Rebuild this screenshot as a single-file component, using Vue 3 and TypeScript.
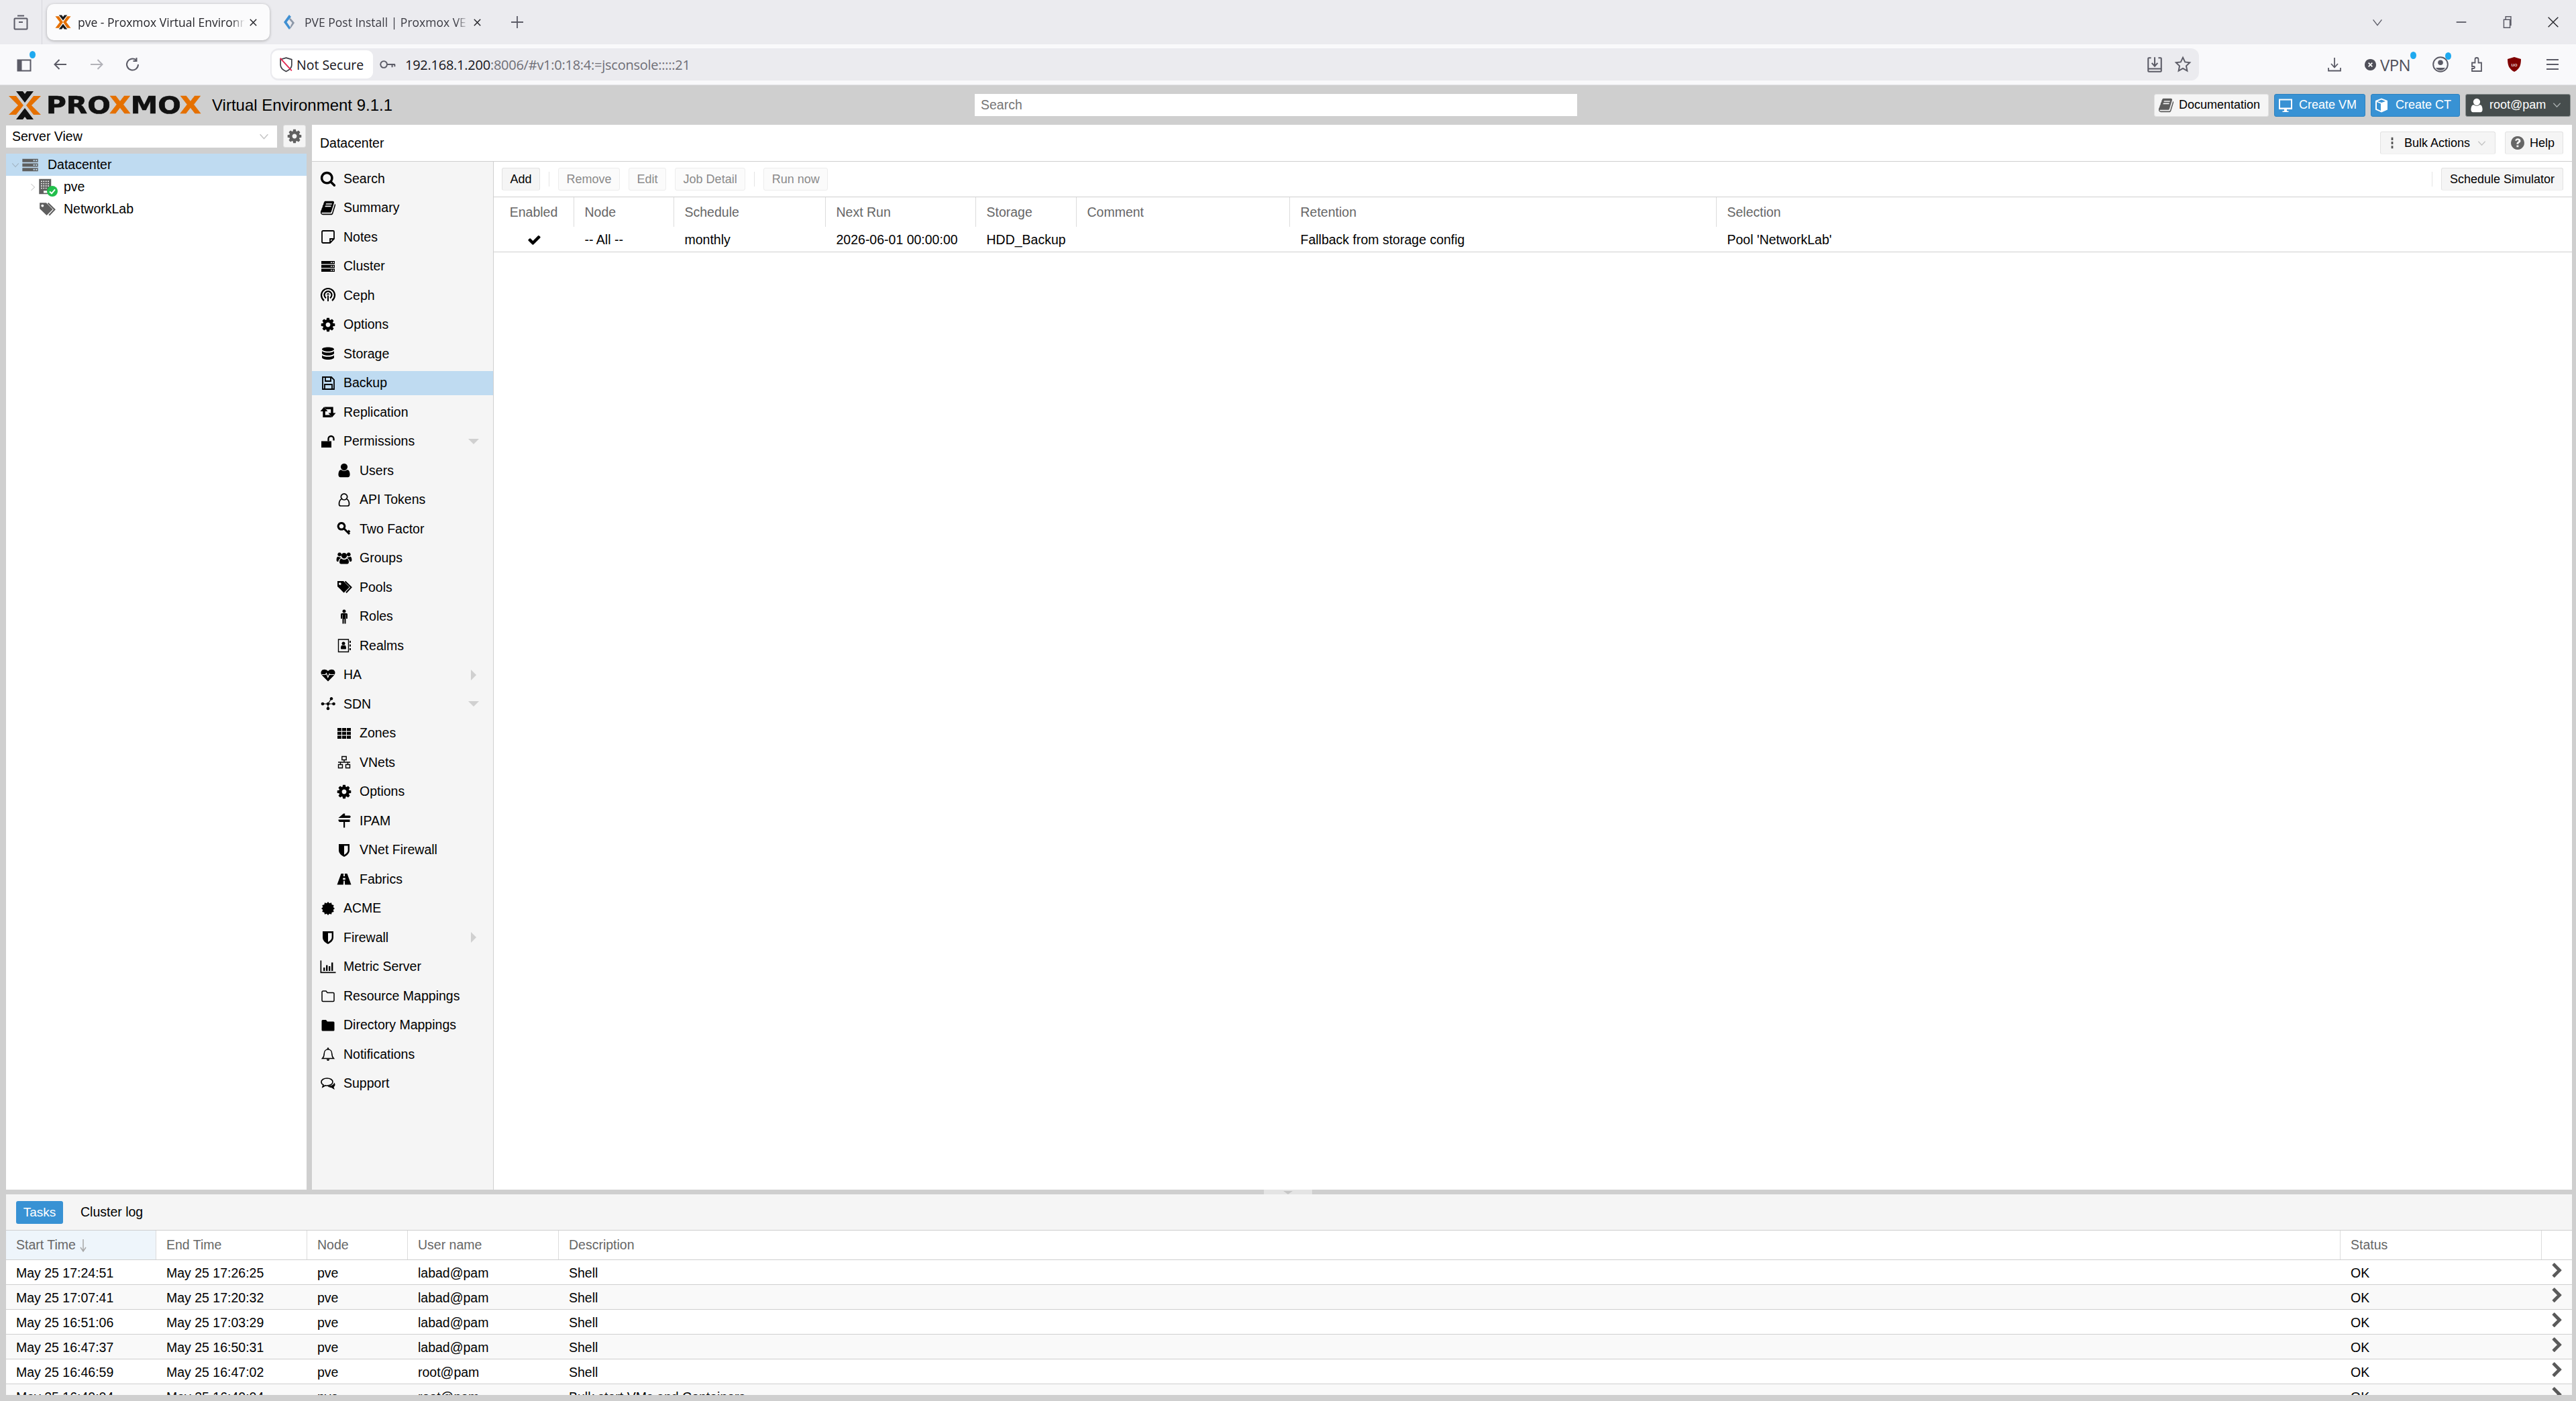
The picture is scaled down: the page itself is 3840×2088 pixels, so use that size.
<script setup lang="ts">
import { h } from 'vue'

type P = { d: string; s?: number; c?: string }
type I = { vb?: string; p: P[] }

const cogD = 'M1152 896q0-106-75-181t-181-75-181 75-75 181 75 181 181 75 181-75 75-181zm512-109v222q0 12-8 23t-20 13l-185 28q-19 54-39 91 35 50 107 138 10 12 10 25t-9 23q-27 37-99 108t-94 71q-12 0-26-9l-138-108q-44 23-91 38-16 136-29 186-7 28-36 28h-222q-14 0-24.5-8.5t-11.5-21.5l-28-184q-49-16-90-37l-141 107q-10 9-25 9-14 0-25-11-126-114-165-168-7-10-7-23 0-12 8-23 15-21 51-66.5t54-70.5q-27-50-41-99l-183-27q-13-2-21-12.5t-8-23.5v-222q0-12 8-23t19-13l186-28q14-46 39-92-40-57-107-138-10-12-10-24 0-10 9-23 26-36 98.5-107.5t94.5-71.5q13 0 26 10l138 107q44-23 91-38 16-136 29-186 7-28 36-28h222q14 0 24.5 8.5t11.5 21.5l28 184q49 16 90 37l142-107q9-9 24-9 13 0 25 10 129 119 165 170 7 8 7 22 0 12-8 23-15 21-51 66.5t-54 70.5q26 50 41 98l183 28q13 2 21 12.5t8 23.5z'
const bookD = 'M1703 478q40 57 18 129l-275 906q-19 64-76.5 107.5t-122.5 43.5h-923q-77 0-148.5-53.5t-99.5-131.5q-24-67-2-127 0-4 3-27t4-37q1-8-3-21.5t-3-19.5q2-11 8-21t16.5-23.5 16.5-23.5q23-38 45-91.5t30-91.5q3-10 .5-30t-.5-28q3-11 17-28t17-23q21-36 42-92t25-90q1-9-2.5-32t.5-28q4-13 22-30.5t22-22.5q19-26 42.5-84.5t27.5-96.5q1-8-3-25.5t-2-26.5q2-8 9-18t18-23 17-21q8-12 16.5-30.5t15-35 16-36 19.5-32 26.5-23.5 36-11.5 47.5 5.5l-1 3q38-9 51-9h761q74 0 114 56t18 130l-274 906q-36 119-71.5 153.5t-128.5 34.5h-869q-27 0-38 15-11 16-1 43 24 70 144 70h923q29 0 56-15.5t35-41.5l300-987q7-22 5-57 38 15 59 43zm-1064 2q-4 13 2 22.5t20 9.5h608q13 0 25.5-9.5t16.5-22.5l21-64q4-13-2-22.5t-20-9.5h-608q-13 0-25.5 9.5t-16.5 22.5zm-83 256q-4 13 2 22.5t20 9.5h608q13 0 25.5-9.5t16.5-22.5l21-64q4-13-2-22.5t-20-9.5h-608q-13 0-25.5 9.5t-16.5 22.5z'
const userD = 'M1536 1399q0 109-62.5 187t-150.5 78h-854q-88 0-150.5-78t-62.5-187q0-85 8.5-160.5t31.5-152 58.5-131 94-89 134.5-34.5q131 128 313 128t313-128q76 0 134.5 34.5t94 89 58.5 131 31.5 152 8.5 160.5zm-256-887q0 159-112.5 271.5t-271.5 112.5-271.5-112.5-112.5-271.5 112.5-271.5 271.5-112.5 271.5 112.5 112.5 271.5z'
const F = '0 0 1792 1792'
const serverD = 'M2 4h20v4.4H2zM16 5.4h1.8v1.6H16zM19 5.4h1.8v1.6H19zM2 9.8h20v4.4H2zM16 11.2h1.8v1.6H16zM19 11.2h1.8v1.6H19zM2 15.6h20V20H2zM16 17h1.8v1.6H16zM19 17h1.8v1.6H19z'
const shieldD = 'M4 3h16v9c0 5-4 8-8 10-4-2-8-5-8-10zM12 5.4h5.6V12c0 3-2.8 5.4-5.6 7z'
const tagsD = 'M2 3h9l9 9-8.4 8.4L2 11zM5.8 5.2a1.8 1.8 0 1 0 .01 0z'

function acme(): string {
  const pts: string[] = []
  const n = 24
  for (let i = 0; i < n; i++) {
    const r = i % 2 ? 8 : 10
    const a = (i / n) * Math.PI * 2
    pts.push(`${(12 + r * Math.cos(a)).toFixed(2)} ${(12 + r * Math.sin(a)).toFixed(2)}`)
  }
  return 'M' + pts.join('L') + 'z'
}

const icons: Record<string, I> = {
  search: { vb: F, p: [{ d: 'M1216 832q0-185-131.5-316.5t-316.5-131.5-316.5 131.5-131.5 316.5 131.5 316.5 316.5 131.5 316.5-131.5 131.5-316.5zm512 832q0 52-38 90t-90 38q-54 0-90-38l-343-342q-179 124-399 124-143 0-273.5-55.5t-225-150-150-225-55.5-273.5 55.5-273.5 150-225 225-150 273.5-55.5 273.5 55.5 225 150 150 225 55.5 273.5q0 220-124 399l343 343q37 37 37 90z' }] },
  book: { vb: F, p: [{ d: bookD }] },
  notes: { p: [{ d: 'M4.5 3h15A1.5 1.5 0 0 1 21 4.5V15l-6 6H4.500A1.500 1.500 0 0 1 3 19.500v-15A1.500 1.500 0 0 1 4.500 3zM21 15h-6v6', s: 1.8 }] },
  server: { p: [{ d: serverD }] },
  ceph: { p: [
    { d: 'M6 20A10 10 0 1 1 18 20', s: 2.2 },
    { d: 'M9 16.300A5.500 5.500 0 1 1 15 16.300', s: 2.200 },
    { d: 'M12 8.900a1.800 1.800 0 1 1-.01 0zM11 11h2v10h-2z' },
  ] },
  cog: { vb: F, p: [{ d: cogD }] },
  db: { p: [{ d: 'M12 2.500c5 0 9 1.300 9 3s-4 3.200-9 3.200-9-1.500-9-3.200 4-3 9-3zM3 8.200c1.400 1.600 5 2.300 9 2.300s7.600-.7 9-2.300v3.300c0 1.700-4 3.200-9 3.200s-9-1.500-9-3.200zM3 14.500c1.400 1.600 5 2.300 9 2.300s7.600-.7 9-2.300v3.300c0 1.700-4 3.200-9 3.200s-9-1.500-9-3.200z' }] },
  floppy: { p: [{ d: 'M4 3h13l4 4v14H4zM8 3v6h8V3M7 21v-7h11v7', s: 1.800 }] },
  retweet: { p: [
    { d: 'M6 4.500 11.500 11H7.800v5.500H15l2.500 3.500H4.300V11H.5z' },
    { d: 'M18 20 12.500 13.500H16.200V8H9L6.500 4.500H19.700V13.500H23.500z' },
  ] },
  unlock: { p: [
    { d: 'M2 11.500h15V21H2z' },
    { d: 'M12.500 11.500V8a4 4 0 0 1 8 0v2.500', s: 2.400 },
  ] },
  user: { vb: F, p: [{ d: userD }] },
  usero: { p: [
    { d: 'M12 2.800a4.600 4.600 0 1 1-.01 0z', s: 1.700 },
    { d: 'M8 11c-2.500 1-3.500 3.500-3.500 7.500 0 1.500 1 2.500 2.500 2.500h10c1.500 0 2.500-1 2.500-2.500 0-4-1-6.500-3.500-7.500', s: 1.700 },
  ] },
  key: { p: [
    { d: 'M8 3.500a4.800 4.800 0 1 1-.01 0z', s: 3 },
    { d: 'M11.500 11.500 20 20', s: 3 },
    { d: 'M18 14.500l2.500 2.500', s: 2.500 },
  ] },
  users: { p: [{ d: 'M12 4a4.200 4.200 0 1 1-.01 0zM5.200 3.500a2.900 2.900 0 1 1-.01 0zM18.800 3.500a2.900 2.900 0 1 1-.01 0zM8.200 12.400c1.100 1 2.300 1.600 3.800 1.600s2.700-.6 3.800-1.600c2.200.2 3.200 2 3.200 5.100 0 2-.9 3-2.400 3H7.400c-1.500 0-2.400-1-2.400-3 0-3.100 1-4.900 3.200-5.100zM2.900 9.500c.7.600 1.500.9 2.300.9.400 0 .8-.1 1.200-.2-.1.800.1 1.400.5 1.900-2 .6-3.200 2.200-3.500 4.800H2.300C1 16.900.6 16 .6 14.600c0-2.900.8-4.900 2.300-5.100zM21.100 9.500c1.500.2 2.300 2.200 2.300 5.100 0 1.400-.4 2.300-1.700 2.300h-1.400c-.3-2.600-1.500-4.200-3.500-4.800.4-.5.600-1.100.5-1.900.4.100.8.200 1.200.2.800 0 1.600-.3 2.600-.9z' }] },
  tags: { p: [{ d: tagsD }, { d: 'M13.500 3.500l9 8.700-7.500 8', s: 2 }] },
  male: { p: [{ d: 'M12 1.500a2.500 2.500 0 1 1-.01 0zM8.500 7h7A1.700 1.700 0 0 1 17 8.700V15h-2v-6h-.5v13.500h-2V15.500h-1v7h-2V9H9v6H7V8.700A1.700 1.700 0 0 1 8.500 7z' }] },
  realm: { p: [
    { d: 'M3.500 3h15v18.500h-15z', s: 1.400 },
    { d: 'M11 6.500a2.500 2.500 0 1 1-.01 0zM7 16c0-2.800.9-4.200 2.200-4.500.5.400 1.100.6 1.800.6s1.300-.2 1.800-.6c1.300.3 2.200 1.700 2.200 4.500 0 1-.5 1.500-1.200 1.500H8.200C7.500 17.500 7 17 7 16zM20 5h2v3h-2zM20 10.500h2v3h-2zM20 16h2v3h-2z' },
  ] },
  heart: { p: [
    { d: 'M12 21.500 3.500 13C1 10.500 1.200 7.500 2.200 6 3.800 3.300 8.200 2.500 12 6.200c3.800-3.700 8.200-2.900 9.800-.2 1 1.500 1.200 4.500-1.300 7z' },
    { d: 'M2.500 11.500H8l1.500-2 2.300 6 2.200-5 1.200 1H21.500', s: 1.200, c: '#f5f5f5' },
  ] },
  sdn: { p: [
    { d: 'M4 12H20M12 12V19M12 12 17 4', s: 1.200 },
    { d: 'M17 2a2.300 2.300 0 1 1-.01 0zM4 9.700a2.300 2.300 0 1 1-.01 0zM12 9.700a2.300 2.300 0 1 1-.01 0zM20.500 9.700a2.300 2.300 0 1 1-.01 0zM12 16.700a2.300 2.300 0 1 1-.01 0z' },
  ] },
  grid: { p: [{ d: 'M2 4h6v4.500H2zM9 4h6v4.500H9zM16 4h6v4.500h-6zM2 9.800h6v4.500H2zM9 9.800h6v4.500H9zM16 9.800h6v4.500h-6zM2 15.600h6v4.500H2zM9 15.600h6v4.500H9zM16 15.600h6v4.500h-6z' }] },
  vnet: { p: [{ d: 'M8.800 3.500h6.400v5H8.800zM3.500 15.500h6v5h-6zM14.500 15.500h6v5h-6zM12 8.500V12M3 12h18M6.500 12v3.500M17.500 12v3.500', s: 1.400 }] },
  ipam: { p: [{ d: 'M11 1.500h2.200v3H20.500l1.500 1.700-1.500 1.800H3.500zM3.500 10.500h17v3.500H13.200v8.500H11V14H5L3.500 12.200z' }] },
  shield: { p: [{ d: shieldD }] },
  road: { p: [{ d: 'M7.500 4h3.700l-.3 4h2.200l-.3-4h3.700l6 16.500h-9.300l-.4-6h-1.600l-.4 6H1.500zM10.200 10.500h3.600v2.500h-3.600z' }] },
  acme: { p: [{ d: acme() }] },
  chart: { p: [{ d: 'M.5 2.500h1.700v17H23.500v1.800H.5zM5 13h2.400v5H5zM9 9.500h2.400V18H9zM13 11h2.400v7H13zM17 5.500h2.400V18H17z' }] },
  foldero: { p: [{ d: 'M3 6.500a1.500 1.500 0 0 1 1.500-1.500H9l2 2.500h8.500A1.500 1.500 0 0 1 21 9v10a1.500 1.500 0 0 1-1.500 1.500h-15A1.500 1.500 0 0 1 3 19z', s: 1.500 }] },
  folder: { p: [{ d: 'M2.500 5.500A1.500 1.500 0 0 1 4 4h5l2 2.500h9A1.500 1.500 0 0 1 21.500 8v11a1.500 1.500 0 0 1-1.500 1.500H4A1.500 1.500 0 0 1 2.500 19z' }] },
  bell: { p: [
    { d: 'M3.500 18.500c2-2 2.800-4 2.800-7.500 0-3.500 2.400-6 5.700-6s5.700 2.500 5.700 6c0 3.500.8 5.500 2.800 7.500z', s: 1.500 },
    { d: 'M12 2.200a1.300 1.300 0 1 1-.01 0zM9.800 19.500h4.400c0 1.400-1 2.500-2.200 2.500s-2.200-1.100-2.200-2.500z' },
  ] },
  comments: { p: [
    { d: 'M10.500 4c4.700 0 8.500 2.300 8.500 5.500s-3.800 5.500-8.500 5.500c-1 0-1.800 0-2.700-.3L4 17l1-3.300C3 12.800 2 11.200 2 9.500 2 6.300 5.800 4 10.500 4z', s: 1.600 },
    { d: 'M21 10.500c1 .8 1.500 1.900 1.500 3 0 1.400-.8 2.600-2 3.500l1.300 4-4.800-3c-2.400-.2-4.300-.9-5.700-2.300 5 .2 9.500-1.800 9.700-5.200z' },
  ] },
  check: { vb: F, p: [{ d: 'M1671 566q0 40-28 68l-724 724-136 136q-28 28-68 28t-68-28l-136-136-362-362q-28-28-28-68t28-68l136-136q28-28 68-28t68 28l294 295 656-657q28-28 68-28t68 28l136 136q28 28 28 68z' }] },
  chev: { vb: F, p: [{ d: 'M1363 877l-742 742q-19 19-45 19t-45-19l-166-166q-19-19-19-45t19-45l531-531-531-531q-19-19-19-45t19-45l166-166q19-19 45-19t45 19l742 742q19 19 19 45t-19 45z' }] },
  desktop: { p: [{ d: 'M2 2.500h20v15.500H14v2.500h2.500V22h-9v-1.500H10V18H2zM4 4.500v11h16v-11z' }] },
  cube: { p: [{ d: 'M12 1.500 21 5v13.500L12 22.500 3 18.500V5zM5 7v10.200l6 2.700V9.500zM12 3.600 6 5.900l6 2.200 6-2.200z' }] },
  dots: { p: [{ d: 'M10.500 3h3v4.500h-3zM10.500 9.700h3v4.600h-3zM10.500 16.500h3V21h-3z' }] },
  help: { p: [{ d: 'M12 2a10 10 0 1 0 .01 0zM12 5.200c2.700 0 4.500 1.500 4.500 3.700 0 1.500-.8 2.400-2.100 3.200-.8.500-1 .9-1 1.700h-3c0-1.800.5-2.700 1.800-3.500 1-.6 1.300-.9 1.300-1.500 0-.7-.6-1.100-1.500-1.100-.9 0-1.600.5-2 1.500L8.200 8.200C8.900 6.300 10.200 5.200 12 5.200zM10.400 15.400h3v2.900h-3z' }] },
  building: { p: [{ d: 'M2 1.500h16v20H2zM4.500 4v1.500H6V4zM7.500 4v1.500H9V4zM10.500 4v1.500H12V4zM13.500 4v1.500H15V4zM4.500 7v1.500H6V7zM7.500 7v1.500H9V7zM10.500 7v1.500H12V7zM13.500 7v1.500H15V7zM4.500 10v1.500H6V10zM7.500 10v1.500H9V10zM10.500 10v1.500H12V10zM13.500 10v1.500H15V10zM4.500 13v1.500H6V13zM7.500 13v1.500H9V13zM10.500 13v1.500H12V13zM8 17v3h5.500v-3z' }] },
}

const Ic = (props: { n: string }) => {
  const i = icons[props.n]
  return h(
    'svg',
    { viewBox: i.vb || '0 0 24 24', 'aria-hidden': 'true' },
    i.p.map((p: P) =>
      h('path', {
        d: p.d,
        'fill-rule': 'evenodd',
        fill: p.s ? 'none' : p.c || 'currentColor',
        stroke: p.s ? p.c || 'currentColor' : 'none',
        'stroke-width': p.s,
      })
    )
  )
}
Ic.props = ['n']

type Item = { l: string; i: string; sub?: boolean; sel?: boolean; arrow?: 'down' | 'right' }
const menu: Item[] = [
  { l: 'Search', i: 'search' },
  { l: 'Summary', i: 'book' },
  { l: 'Notes', i: 'notes' },
  { l: 'Cluster', i: 'server' },
  { l: 'Ceph', i: 'ceph' },
  { l: 'Options', i: 'cog' },
  { l: 'Storage', i: 'db' },
  { l: 'Backup', i: 'floppy', sel: true },
  { l: 'Replication', i: 'retweet' },
  { l: 'Permissions', i: 'unlock', arrow: 'down' },
  { l: 'Users', i: 'user', sub: true },
  { l: 'API Tokens', i: 'usero', sub: true },
  { l: 'Two Factor', i: 'key', sub: true },
  { l: 'Groups', i: 'users', sub: true },
  { l: 'Pools', i: 'tags', sub: true },
  { l: 'Roles', i: 'male', sub: true },
  { l: 'Realms', i: 'realm', sub: true },
  { l: 'HA', i: 'heart', arrow: 'right' },
  { l: 'SDN', i: 'sdn', arrow: 'down' },
  { l: 'Zones', i: 'grid', sub: true },
  { l: 'VNets', i: 'vnet', sub: true },
  { l: 'Options', i: 'cog', sub: true },
  { l: 'IPAM', i: 'ipam', sub: true },
  { l: 'VNet Firewall', i: 'shield', sub: true },
  { l: 'Fabrics', i: 'road', sub: true },
  { l: 'ACME', i: 'acme' },
  { l: 'Firewall', i: 'shield', arrow: 'right' },
  { l: 'Metric Server', i: 'chart' },
  { l: 'Resource Mappings', i: 'foldero' },
  { l: 'Directory Mappings', i: 'folder' },
  { l: 'Notifications', i: 'bell' },
  { l: 'Support', i: 'comments' },
]

const jobHead = ['Enabled', 'Node', 'Schedule', 'Next Run', 'Storage', 'Comment', 'Retention', 'Selection']
const jobRow = ['-- All --', 'monthly', '2026-06-01 00:00:00', 'HDD_Backup', '', 'Fallback from storage config', "Pool 'NetworkLab'"]

const logHead = ['End Time', 'Node', 'User name', 'Description', 'Status', '']
const logRows = [
  ['May 25 17:24:51', 'May 25 17:26:25', 'pve', 'labad@pam', 'Shell', 'OK'],
  ['May 25 17:07:41', 'May 25 17:20:32', 'pve', 'labad@pam', 'Shell', 'OK'],
  ['May 25 16:51:06', 'May 25 17:03:29', 'pve', 'labad@pam', 'Shell', 'OK'],
  ['May 25 16:47:37', 'May 25 16:50:31', 'pve', 'labad@pam', 'Shell', 'OK'],
  ['May 25 16:46:59', 'May 25 16:47:02', 'pve', 'root@pam', 'Shell', 'OK'],
  ['May 25 16:40:04', 'May 25 16:40:04', 'pve', 'root@pam', 'Bulk start VMs and Containers', 'OK'],
]
</script>

<template>
  <div class="shell">
    <!-- browser tab strip -->
    <div class="tabstrip">
      <div class="tabs-btn">
        <svg viewBox="0 0 24 24"><path d="M7 2.500h10M3.500 6.500h17a1 1 0 0 1 1 1v14a1 1 0 0 1-1 1h-17a1 1 0 0 1-1-1v-14a1 1 0 0 1 1-1zM9 12h6" fill="none" stroke="#5b5b66" stroke-width="2" /></svg>
      </div>
      <div class="tab active">
        <svg class="favicon" viewBox="0 0 50 44"><path d="M1 4h11l13 18L12 40H1l14-18z" fill="#e57000" /><path d="M49 4H38L25 22l13 18h11L35 22z" fill="#e57000" /><path d="M12 0h9l4 6 4-6h9L25 17zM12 44h9l4-6 4 6h9L25 27z" fill="#1a1a1a" /></svg>
        <span class="tab-title">pve - Proxmox Virtual Environment</span>
        <svg class="tab-x" viewBox="0 0 16 16"><path d="M3 3l10 10M13 3L3 13" stroke="#26262b" stroke-width="1.600" fill="none" /></svg>
      </div>
      <div class="tab">
        <svg class="favicon" viewBox="0 0 24 24"><path d="M11 1 3 12l8 11 2-3-5.500-8L14 4z" fill="#3f8fd2" /><path d="M13 6l6 7-7 10 1-5 2.500-5L11 8z" fill="#8d98a8" /></svg>
        <span class="tab-title">PVE Post Install | Proxmox VE Helper-Scripts</span>
        <svg class="tab-x" viewBox="0 0 16 16"><path d="M3 3l10 10M13 3L3 13" stroke="#26262b" stroke-width="1.600" fill="none" /></svg>
      </div>
      <svg class="tab-plus" viewBox="0 0 24 24"><path d="M12 3v18M3 12h18" stroke="#5b5b66" stroke-width="1.800" fill="none" /></svg>
      <div class="win">
        <svg viewBox="0 0 24 24"><path d="M5 8l7 9 7-9" stroke="#5b5b66" stroke-width="1.500" fill="none" /></svg>
        <svg class="w-min" viewBox="0 0 24 24"><path d="M4 12h16" stroke="#5b5b66" stroke-width="2" fill="none" /></svg>
        <svg class="w-max" viewBox="0 0 24 24"><path d="M7 8h10v13H7zM10 8V3h8.500v14H17" stroke="#5b5b66" stroke-width="1.600" fill="none" /></svg>
        <svg class="w-x" viewBox="0 0 24 24"><path d="M4 4l16 16M20 4L4 20" stroke="#26262b" stroke-width="1.500" fill="none" /></svg>
      </div>
    </div>

    <!-- browser nav -->
    <div class="navbar">
      <div class="nav-slot dot-wrap">
        <svg viewBox="0 0 24 24"><path d="M2.500 5.500h19v16h-19z" stroke="#5b5b66" stroke-width="2" fill="none" /><path d="M2.500 5.500h6v16h-6z" fill="#5b5b66" /></svg>
        <i class="bdot"></i>
      </div>
      <div class="nav-slot"><svg viewBox="0 0 24 24"><path d="M21 12H4M10.500 5 3.500 12l7 7" stroke="#5b5b66" stroke-width="2" fill="none" /></svg></div>
      <div class="nav-slot"><svg viewBox="0 0 24 24"><path d="M3 12h17M13.500 5l7 7-7 7" stroke="#b2b2b8" stroke-width="2" fill="none" /></svg></div>
      <div class="nav-slot"><svg viewBox="0 0 24 24"><path d="M20 12a8.500 8.500 0 1 1-3-6.500M17.500 2v5h-5" stroke="#5b5b66" stroke-width="2" fill="none" /></svg></div>

      <div class="urlbar">
        <div class="secure">
          <svg viewBox="0 0 24 24"><path d="M12 2.500 20 5v8c0 4.500-3.500 7-8 9-4.500-2-8-4.500-8-9V5z" stroke="#3b3b42" stroke-width="1.600" fill="none" /><path d="M3.500 3 20 21" stroke="#e22850" stroke-width="1.800" fill="none" /></svg>
          <span>Not Secure</span>
        </div>
        <svg class="key" viewBox="0 0 24 24"><path d="M7.500 7.500a4.500 4.500 0 1 1-.01 0zM12 12h11M19 12v4M22.500 12v3" stroke="#5b5b66" stroke-width="1.800" fill="none" /></svg>
        <div class="url"><b>192.168.1.200</b>:8006/#v1:0:18:4:=jsconsole:::::21</div>
        <svg class="url-ic first" viewBox="0 0 24 24"><path d="M7 3H4a1 1 0 0 0-1 1v17a1 1 0 0 0 1 1h16a1 1 0 0 0 1-1V4a1 1 0 0 0-1-1h-3M3 18h18M12 2v11M8 10l4 4.500 4-4.500" stroke="#5b5b66" stroke-width="1.900" fill="none" /></svg>
        <svg class="url-ic" viewBox="0 0 24 24"><path d="M12 2.500l2.900 6.200 6.600.8-4.900 4.600 1.300 6.700-5.900-3.400-5.900 3.400 1.300-6.700L2.500 9.500l6.600-.8z" stroke="#5b5b66" stroke-width="1.800" fill="none" /></svg>
      </div>

      <div class="nav-right">
        <svg class="nr dl" viewBox="0 0 24 24"><path d="M12 2v14M7 11l5 5.500 5-5.500M3 17v4.500h18V17" stroke="#5b5b66" stroke-width="1.800" fill="none" /></svg>
        <div class="vpn">
          <svg viewBox="0 0 20 20"><path d="M10 1a9 9 0 1 0 .01 0z" fill="#50505a" /><path d="M7 7l6 6M13 7l-6 6" stroke="#fff" stroke-width="1.800" /></svg>
          <span>VPN</span>
          <i class="bdot"></i>
        </div>
        <div class="nr-wrap prof">
          <svg viewBox="0 0 24 24"><circle cx="12" cy="12" r="10" stroke="#5b5b66" stroke-width="1.800" fill="none" /><circle cx="12" cy="9.500" r="3.500" fill="#5b5b66" /><path d="M5.500 16.500h13c-1.500 2.500-4 3.500-6.500 3.500s-5-1-6.500-3.500z" fill="#5b5b66" /></svg>
          <i class="bdot"></i>
        </div>
        <svg class="nr ext" viewBox="0 0 24 24"><path d="M5 22h14V9.500h-4.500V4.500a2.500 2.500 0 0 0-5 0V9.500H5v5.500h2.500a1.500 1.500 0 0 1 0 3H5z" stroke="#5b5b66" stroke-width="1.800" fill="none" /></svg>
        <svg class="nr ub" viewBox="0 0 24 24"><path d="M12 1 22 4c0 9-2 15-10 19C4 19 2 13 2 4z" fill="#800000" /><text x="12" y="14.500" font-size="8" fill="#fff" text-anchor="middle" font-family="Liberation Sans, sans-serif">uo</text></svg>
        <svg class="nr mn" viewBox="0 0 24 24"><path d="M3 5h18M3 12h18M3 19h18" stroke="#5b5b66" stroke-width="2" fill="none" /></svg>
      </div>
    </div>

    <!-- PVE header -->
    <header class="pve-head">
      <div class="brand">
        <svg class="logo-x" viewBox="0 0 50 44"><path d="M1 8h11l11 14L12 36H1l14-14z" fill="#e57000" /><path d="M49 8H38L27 22l11 14h11L35 22z" fill="#e57000" /><path d="M12 1h10l3 4 3-4h10L25 18zM12 43h10l3-4 3 4h10L25 26z" fill="#111" /></svg>
        <span class="logo-t">PRO<em>X</em>MO<em>X</em></span>
        <span class="ve">Virtual Environment 9.1.1</span>
      </div>
      <div class="gsearch">Search</div>
      <div class="head-btns">
        <div class="hbtn doc"><Ic n="book" /><span>Documentation</span></div>
        <div class="hbtn blue vm"><Ic n="desktop" /><span>Create VM</span></div>
        <div class="hbtn blue ct"><Ic n="cube" /><span>Create CT</span></div>
        <div class="hbtn dark">
          <Ic n="user" /><span>root@pam</span>
          <svg class="caret" viewBox="0 0 16 16"><path d="M2.500 5 8 11l5.500-6" stroke="#a8adad" stroke-width="1.400" fill="none" /></svg>
        </div>
      </div>
    </header>

    <!-- workspace -->
    <div class="work">
      <aside class="left">
        <div class="view-row">
          <div class="combo">
            <span>Server View</span>
            <svg class="caret" viewBox="0 0 16 16"><path d="M2.500 5 8 11l5.500-6" stroke="#c4c4c4" stroke-width="1.400" fill="none" /></svg>
          </div>
          <div class="gear"><Ic n="cog" /></div>
        </div>
        <div class="tree">
          <div class="node sel">
            <svg class="tw" viewBox="0 0 16 16"><path d="M2.500 5 8 11l5.500-6" stroke="#a3b5c4" stroke-width="1.200" fill="none" /></svg>
            <Ic class="dc" n="server" />
            <span class="dc-l">Datacenter</span>
          </div>
          <div class="node l2">
            <svg class="tw2" viewBox="0 0 16 16"><path d="M5 2.500 11 8l-6 5.500" stroke="#d0d0d0" stroke-width="1.200" fill="none" /></svg>
            <div class="pve-ic">
              <Ic n="building" />
              <svg class="ok" viewBox="0 0 16 16"><circle cx="8" cy="8" r="8" fill="#21bf4b" /><path d="M4 8.500 7 11.300l5-6" stroke="#fff" stroke-width="2" fill="none" /></svg>
            </div>
            <span>pve</span>
          </div>
          <div class="node l3">
            <Ic class="gray" n="tags" />
            <span>NetworkLab</span>
          </div>
        </div>
      </aside>

      <main class="content">
        <div class="title">
          <span class="t">Datacenter</span>
          <div class="title-btns">
            <div class="btn bulk">
              <Ic class="dots" n="dots" />
              <span>Bulk Actions</span>
              <svg class="caret" viewBox="0 0 16 16"><path d="M2.500 5 8 11l5.500-6" stroke="#c4c4c4" stroke-width="1.400" fill="none" /></svg>
            </div>
            <div class="btn help"><Ic class="hp" n="help" /><span>Help</span></div>
          </div>
        </div>

        <div class="split">
          <nav class="menu">
            <div v-for="(m, i) in menu" :key="i" class="mi" :class="{ sub: m.sub, sel: m.sel }">
              <Ic class="mic" :n="m.i" />
              <span>{{ m.l }}</span>
              <i v-if="m.arrow" class="arrow" :class="m.arrow"></i>
            </div>
          </nav>

          <section class="pane">
            <div class="tb">
              <div class="btn">Add</div>
              <i class="sep"></i>
              <div class="btn off">Remove</div>
              <div class="btn off">Edit</div>
              <div class="btn off">Job Detail</div>
              <i class="sep"></i>
              <div class="btn off">Run now</div>
              <i class="sep push"></i>
              <div class="btn sim">Schedule Simulator</div>
            </div>
            <div class="jobs jhead">
              <div v-for="(c, i) in jobHead" :key="c" class="hc" :class="{ ctr: i === 0 }">{{ c }}</div>
            </div>
            <div class="jobs jrow">
              <div class="cc ctr"><Ic class="chk" n="check" /></div>
              <div v-for="(c, i) in jobRow" :key="i" class="cc">{{ c }}</div>
            </div>
          </section>
        </div>
      </main>
    </div>

    <div class="handle"><i></i></div>

    <!-- log panel -->
    <section class="log">
      <div class="log-tb">
        <div class="tasks">Tasks</div>
        <div class="clog">Cluster log</div>
      </div>
      <div class="lrow lhead">
        <div class="hc sorted">
          <span>Start Time</span>
          <svg class="sort" viewBox="0 0 12 24"><path d="M6 3v17M2 15l4 6 4-6" stroke="#a8a8a8" stroke-width="1.500" fill="none" /></svg>
        </div>
        <div v-for="(c, i) in logHead" :key="i" class="hc">{{ c }}</div>
      </div>
      <div class="lbody">
        <div v-for="(r, i) in logRows" :key="i" class="lrow ldata" :class="{ odd: i % 2 === 1 }">
          <div v-for="(c, j) in r" :key="j" class="cc">{{ c }}</div>
          <div class="cc go"><Ic class="gochev" n="chev" /></div>
        </div>
      </div>
    </section>
  </div>
</template>

<style>
html, body { margin: 0; padding: 0; background: #cfcfcf; }
</style>

<style scoped>
.shell {
  width: 100vw; height: 100vh; overflow: hidden; display: flex; flex-direction: column;
  background: #cfcfcf; color: #000; font-family: "Liberation Sans", Arial, sans-serif; font-size: 19.5px;
}
svg { display: block; flex: none; }

/* Tab strip */
.tabstrip { height: 66px; flex: none; background: #ebebef; display: flex; align-items: center; position: relative; font-family: "Open Sans", "Noto Sans", sans-serif; }
.tabs-btn { width: 62px; height: 66px; flex: none; display: flex; align-items: center; justify-content: center; border-right: 1px solid #d6d6dc; box-sizing: content-box; }
.tabs-btn svg { width: 24px; height: 24px; }
.tab { width: 332px; height: 54px; margin-left: 7px; display: flex; align-items: center; padding: 0 17px 0 12px; box-sizing: border-box; border-radius: 10px; font-size: 17.5px; color: #3a3a42; flex: none; }
.tab + .tab { margin-left: 4px; width: 317px; padding-left: 14px; padding-right: 4px; }
.tab.active { background: #fbfbfc; box-shadow: 0 1px 4px rgba(0, 0, 0, .28); color: #26262b; }
.favicon { width: 24px; height: 28px; flex: none; margin-right: 10px; }
.tab-title { flex: 1; overflow: hidden; white-space: nowrap; -webkit-mask-image: linear-gradient(to right, #000 92%, transparent 100%); mask-image: linear-gradient(to right, #000 92%, transparent 100%); }
.tab-x { width: 15px; height: 15px; flex: none; margin-left: 5px; }
.tab-plus { width: 24px; height: 24px; flex: none; margin-left: 36px; }
.win { margin-left: auto; display: flex; align-items: center; padding-right: 23px; }
.win svg { width: 22px; height: 22px; }
.w-min { margin-left: 103px; }
.w-max { margin-left: 46px; }
.w-x { margin-left: 47px; }

/* Nav */
.navbar { height: 60px; flex: none; background: #f9f9fb; display: flex; align-items: center; padding-left: 9px; border-bottom: 1px solid #e2e2e6; font-family: "Open Sans", "Noto Sans", sans-serif; }
.nav-slot { width: 54px; height: 40px; display: flex; align-items: center; justify-content: center; position: relative; flex: none; }
.nav-slot svg { width: 24px; height: 24px; }
.bdot { position: absolute; width: 9px; height: 11px; border-radius: 50%; background: #1fa9ef; }
.dot-wrap .bdot { top: 0; right: 10px; }
.urlbar { margin-left: 178px; width: 2875px; height: 48px; flex: none; background: #ebebef; border-radius: 12px; display: flex; align-items: center; padding: 0 11px 0 2px; box-sizing: border-box; }
.secure { width: 151px; height: 42px; background: #fff; border-radius: 9px; display: flex; align-items: center; padding-left: 9px; box-sizing: border-box; font-size: 19.5px; color: #15141a; flex: none; white-space: nowrap; }
.secure svg { width: 25px; height: 30px; margin-right: 3px; }
.key { width: 26px; height: 26px; margin-left: 8px; flex: none; }
.url { margin-left: 14px; font-size: 20px; color: #6e6e76; letter-spacing: -.25px; white-space: nowrap; }
.url b { font-weight: 400; color: #15141a; }
.url-ic { width: 26px; height: 30px; flex: none; margin-left: 16px; }
.url-ic.first { margin-left: auto; }
.nav-right { flex: 1; display: flex; align-items: center; position: relative; }
.nr { width: 24px; height: 26px; flex: none; }
.dl { margin-left: 190px; }
.vpn { margin-left: 32px; display: flex; align-items: center; position: relative; font-size: 24px; color: #50505a; }
.vpn svg { width: 19px; height: 19px; margin-right: 5px; }
.vpn span { width: 48px; white-space: nowrap; letter-spacing: -.6px; }
.vpn .bdot { top: -3px; right: -6px; }
.nr-wrap { position: relative; }
.prof { margin-left: 29px; width: 26px; height: 26px; }
.prof svg { width: 26px; height: 26px; }
.prof .bdot { top: -5px; right: -3px; }
.ext { margin-left: 29px; }
.ub { margin-left: 32px; }
.mn { margin-left: 33px; }

/* PVE header */
.pve-head { height: 59px; flex: none; display: grid; grid-template-columns: 1453px 898px 1fr; align-items: center; }
.brand { display: flex; align-items: center; padding-left: 12px; }
.logo-x { width: 50px; height: 44px; flex: none; }
.logo-t { margin-left: 7px; width: 235px; flex: none; font-family: "DejaVu Sans", sans-serif; font-weight: 700; font-size: 36px; letter-spacing: 0; color: #111; line-height: 1; white-space: nowrap; transform: scaleX(1.13); transform-origin: left center; -webkit-text-stroke: .7px currentColor; }
.logo-t em { font-style: normal; color: #e57000; }
.ve { margin-left: 12px; font-size: 24px; color: #000; white-space: nowrap; }
.gsearch { height: 33px; background: #fff; padding-left: 9px; display: flex; align-items: center; color: #757575; }
.head-btns { display: flex; justify-content: flex-end; gap: 8px; padding-right: 8px; }
.hbtn { height: 34px; display: flex; align-items: center; box-sizing: border-box; border-radius: 3px; font-size: 18px; white-space: nowrap; flex: none; }
.hbtn svg { width: 24px; height: 24px; }
.hbtn .caret { width: 15px; height: 15px; margin: 0 0 0 9px; }
.doc { width: 171px; background: #f5f5f5; border: 1px solid #e2e2e2; color: #000; padding-left: 5px; }
.doc svg { color: #5c5c5c; margin-right: 7px; }
.blue { background: #3892d4; border: 1px solid #2d81bf; color: #fff; }
.vm { width: 136px; padding-left: 4px; }
.vm svg { margin-right: 8px; }
.ct { width: 133px; padding-left: 3px; }
.ct svg { margin-right: 9px; }
.dark { width: 157px; background: #464d4d; border: 1px solid #8b9191; color: #fff; padding-left: 4px; }
.dark svg:first-child { margin-right: 7px; }

/* Workspace */
.work { flex: 1; min-height: 0; display: flex; gap: 8px; padding: 0 6px 0 9px; }
.left { width: 448px; flex: none; display: flex; flex-direction: column; }
.view-row { height: 43px; flex: none; display: flex; align-items: flex-start; justify-content: space-between; }
.combo { margin-top: 1px; width: 404px; height: 33px; background: #fff; padding: 0 9px; box-sizing: border-box; display: flex; align-items: center; justify-content: space-between; }
.combo .caret { width: 17px; height: 17px; margin-right: 2px; }
.gear { width: 34px; height: 34px; margin-right: 1px; background: #f5f5f5; border: 1px solid #e0e0e0; border-radius: 3px; box-sizing: border-box; display: flex; align-items: center; justify-content: center; color: #616161; }
.gear svg { width: 24px; height: 24px; }
.tree { flex: 1; background: #fff; }
.node { height: 33px; display: flex; align-items: center; }
.node.sel { background: #bfdbf1; }
.tw { width: 14px; height: 14px; margin-left: 7px; }
.dc { width: 28px; height: 28px; margin-left: 1px; color: #5f5f5f; }
.dc-l { margin-left: 12px; }
.l2 { padding-left: 33px; }
.tw2 { width: 14px; height: 14px; }
.pve-ic { width: 27px; height: 27px; position: relative; color: #5f5f5f; flex: none; }
.pve-ic > svg:first-child { width: 27px; height: 27px; }
.ok { position: absolute; width: 16px; height: 16px; right: -3px; bottom: -1px; }
.l2 span { margin-left: 12px; }
.l3 span { margin-left: 12px; }
.l3 { padding-left: 48px; }
.gray { width: 26px; height: 26px; color: #5f5f5f; }

/* Content */
.content { flex: 1; min-width: 0; display: flex; flex-direction: column; background: #fff; }
.title { height: 55px; flex: none; box-sizing: border-box; border-bottom: 1px solid #cfcfcf; display: flex; align-items: center; justify-content: space-between; padding: 0 13px 0 12px; }
.title-btns { display: flex; gap: 14px; }
.btn { height: 34px; padding: 0 11.5px; box-sizing: border-box; border: 1px solid #e2e2e2; border-bottom-color: #efefef; border-radius: 3px; background: #f5f5f5; font-size: 18px; display: flex; align-items: center; white-space: nowrap; color: #000; flex: none; }
.btn.off { background: #fbfbfb; color: #8a8a8a; border-color: #ededed; }
.btn.sim { width: 182px; justify-content: center; padding: 0; }
.bulk { width: 172px; padding: 0 8px; }
.bulk .caret { width: 15px; height: 15px; margin-left: 10px; }
.dots { width: 22px; height: 22px; margin-right: 7px; margin-left: -2px; color: #555; }
.help { width: 87px; padding: 0 6px; }
.hp { width: 24px; height: 24px; margin-right: 6px; color: #666; }
.split { flex: 1; min-height: 0; display: flex; }
.menu { width: 271px; flex: none; box-sizing: border-box; border-right: 1px solid #cfcfcf; background: #f5f5f5; padding-top: 7px; }
.mi { height: 36px; margin-bottom: 7.5px; display: flex; align-items: center; padding-left: 12px; position: relative; white-space: nowrap; }
.mi.sel { background: #bfdbf1; }
.mi.sub { padding-left: 36px; }
.mic { width: 24px; height: 24px; margin-right: 11px; color: #000; }
.arrow { position: absolute; width: 0; height: 0; }
.arrow.down { left: 233px; top: 14px; border-left: 8px solid transparent; border-right: 8px solid transparent; border-top: 8px solid #d0d0d0; }
.arrow.right { left: 237px; top: 10px; border-top: 8px solid transparent; border-bottom: 8px solid transparent; border-left: 8px solid #d0d0d0; }

.pane { flex: 1; min-width: 0; display: flex; flex-direction: column; }
.tb { height: 53px; flex: none; box-sizing: border-box; border-bottom: 1px solid #cfcfcf; display: flex; align-items: center; gap: 13px; padding: 0 13px 0 12px; }
.sep { width: 1px; height: 22px; background: #e4e4e4; flex: none; }
.sep.push { margin-left: auto; }
.jobs { display: grid; grid-template-columns: 120px 149px 226px 224px 150px 318px 636px 1fr; }
.jhead { height: 44px; flex: none; }
.jrow { height: 38px; flex: none; box-sizing: border-box; border-bottom: 1px solid #cfcfcf; }
.hc { color: #666; display: flex; align-items: center; padding-left: 15px; border-right: 1px solid #dcdcdc; white-space: nowrap; overflow: hidden; }
.jobs .hc, .jobs .cc { padding-left: 15.5px; }
.hc:last-child { border-right: 0; }
.jobs .hc.ctr, .jobs .cc.ctr { padding-left: 0; justify-content: center; }
.cc { display: flex; align-items: center; padding-left: 15px; white-space: nowrap; overflow: hidden; padding-top: 2px; }
.chk { width: 21px; height: 21px; }

/* Splitter + log */
.handle { height: 7px; flex: none; display: flex; justify-content: center; }
.handle i { width: 72px; height: 7px; background: #e4e4e4; position: relative; display: block; }
.handle i::after { content: ""; position: absolute; left: 29px; top: 2px; border-left: 7px solid transparent; border-right: 7px solid transparent; border-top: 5px solid #c6c6c6; }
.log { height: 299px; flex: none; margin: 0 6px 9px 9px; display: flex; flex-direction: column; background: #fff; overflow: hidden; }
.log-tb { height: 54px; flex: none; box-sizing: border-box; background: #f5f5f5; border-bottom: 1px solid #cfcfcf; display: flex; align-items: center; padding-left: 15px; }
.tasks { width: 70px; height: 34px; background: #3892d4; color: #fff; border-radius: 3px; display: flex; align-items: center; justify-content: center; font-size: 19px; }
.clog { margin-left: 26px; }
.lrow { display: grid; grid-template-columns: 224px 225px 150px 225px 2656px 300px 1fr; }
.lhead { height: 44px; flex: none; box-sizing: border-box; border-bottom: 1px solid #cfcfcf; }
.sorted { background: #eef5fb; gap: 5px; }
.sort { width: 12px; height: 24px; }
.lbody { flex: 1; overflow: hidden; }
.ldata { height: 37px; box-sizing: border-box; border-bottom: 1px solid #cfcfcf; }
.ldata.odd { background: #f9f9f9; }
.go { padding-left: 11px; padding-top: 0; align-items: flex-start; }
.gochev { width: 24px; height: 24px; color: #5a5a5a; margin-top: 4px; }
</style>
